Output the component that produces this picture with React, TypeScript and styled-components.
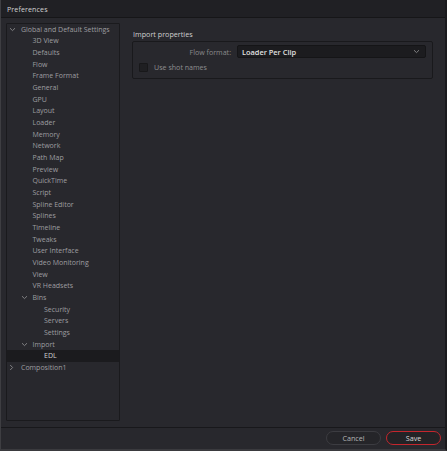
import React from "react";
import styled, { createGlobalStyle } from "styled-components";

const Global = createGlobalStyle`
  html, body { margin: 0; padding: 0; background: #28282e; }
  body { font-family: "Open Sans", "Noto Sans", sans-serif; }
  * { box-sizing: border-box; }
`;

const Window = styled.div`
  width: 447px;
  height: 451px;
  display: flex;
  flex-direction: column;
  background: #28282d;
  border-left: 1px solid #3e3e42;
  border-right: 2px solid #1a1a1d;
  border-bottom: 2px solid #3a3a3e;
  overflow: hidden;
`;

const TitleBar = styled.div`
  height: 18px;
  flex: none;
  display: flex;
  align-items: center;
  padding-left: 6px;
  background: #202024;
  border-bottom: 1px solid #161618;
  color: #d2d2d2;
  font-size: 7.1px;
  letter-spacing: 0.1px;
`;

const Main = styled.div`
  flex: 1;
  display: flex;
  gap: 12px;
  padding: 5px 12px 6px 5px;
  min-height: 0;
`;

const Tree = styled.div`
  width: 114px;
  flex: none;
  border: 1px solid #1a1a1d;
  border-radius: 1px;
  background: #28282d;
`;

const Row = styled.div<{ $indent: number; $selected?: boolean }>`
  height: 11.66px;
  display: flex;
  align-items: center;
  padding-left: ${(p) => p.$indent}px;
  padding-bottom: 1px;
  font-size: 7px;
  color: ${(p) => (p.$selected ? "#cfcfcf" : "#9e9ea0")};
  background: ${(p) => (p.$selected ? "#1b1b1e" : "transparent")};
  white-space: nowrap;
`;

const Chevron = styled.span`
  width: 8px;
  display: inline-flex;
  align-items: center;
  justify-content: flex-start;
  margin-right: 4px;
  margin-left: -12px;
  svg { display: block; }
`;

const Content = styled.div`
  flex: 1;
  display: flex;
  flex-direction: column;
  padding-top: 6px;
`;

const Heading = styled.div`
  font-size: 7.2px;
  color: #cfcfcf;
  height: 10px;
  line-height: 10px;
  padding-left: 1px;
  margin-bottom: 2px;
`;

const Group = styled.div`
  border: 1px solid #19191c;
  border-radius: 2px;
  height: 38px;
  padding: 3px 6px 0 5px;
  display: flex;
  flex-direction: column;
  gap: 4px;
`;

const FieldRow = styled.div`
  display: flex;
  align-items: center;
  gap: 6px;
`;

const Label = styled.div`
  width: 93px;
  text-align: right;
  font-size: 7.1px;
  color: #8a8a8c;
`;

const Select = styled.div`
  flex: 1;
  height: 13px;
  border-radius: 2px;
  background: #1c1c1f;
  border: 1px solid #151517;
  display: flex;
  align-items: center;
  justify-content: space-between;
  padding: 0 5px 0 4px;
  font-size: 7.4px;
  color: #e0e0e0;
  font-weight: 600;
`;

const CheckRow = styled.div`
  display: flex;
  align-items: center;
  gap: 6px;
  padding-left: 1px;
`;

const Box = styled.div`
  width: 9px;
  height: 9px;
  border-radius: 1px;
  background: #1f1f22;
  border: 1px solid #18181a;
`;

const CheckLabel = styled.div`
  font-size: 7.1px;
  color: #8e8e90;
`;

const Footer = styled.div`
  height: 22px;
  flex: none;
  border-top: 1px solid #18181b;
  display: flex;
  align-items: center;
  justify-content: flex-end;
  gap: 5px;
  padding-right: 4px;
  padding-bottom: 1px;
`;

const Button = styled.div<{ $primary?: boolean }>`
  width: 55px;
  height: 14px;
  border-radius: 7px;
  border: 1px solid ${(p) => (p.$primary ? "#c4262d" : "#3c3c41")};
  background: ${(p) => (p.$primary ? "#232326" : "#252529")};
  display: flex;
  align-items: center;
  justify-content: center;
  font-size: 7.2px;
  color: ${(p) => (p.$primary ? "#d8d8d8" : "#b4b4b4")};
`;

const Down = () => (
  <svg width="7" height="5" viewBox="0 0 7 5">
    <path d="M1 1.2 L3.5 3.6 L6 1.2" fill="none" stroke="#8a8a8c" strokeWidth="0.9" />
  </svg>
);
const Right = () => (
  <svg width="5" height="7" viewBox="0 0 5 7">
    <path d="M1.2 1 L3.6 3.5 L1.2 6" fill="none" stroke="#8a8a8c" strokeWidth="0.9" />
  </svg>
);

type Item = { label: string; level: number; open?: boolean; closed?: boolean; selected?: boolean };

const items: Item[] = [
  { label: "Global and Default Settings", level: 0, open: true },
  ...["3D View", "Defaults", "Flow", "Frame Format", "General", "GPU", "Layout", "Loader", "Memory", "Network", "Path Map", "Preview", "QuickTime", "Script", "Spline Editor", "Splines", "Timeline", "Tweaks", "User Interface", "Video Monitoring", "View", "VR Headsets"].map((l) => ({ label: l, level: 1 })),
  { label: "Bins", level: 1, open: true },
  { label: "Security", level: 2 },
  { label: "Servers", level: 2 },
  { label: "Settings", level: 2 },
  { label: "Import", level: 1, open: true },
  { label: "EDL", level: 2, selected: true },
  { label: "Composition1", level: 0, closed: true },
];

export default function App() {
  return (
    <>
      <Global />
      <Window>
        <TitleBar>Preferences</TitleBar>
        <Main>
          <Tree>
            {items.map((it, i) => (
              <Row key={i} $indent={14 + it.level * 11.5} $selected={it.selected}>
                {it.open || it.closed ? <Chevron>{it.open ? <Down /> : <Right />}</Chevron> : null}
                {it.label}
              </Row>
            ))}
          </Tree>
          <Content>
            <Heading>Import properties</Heading>
            <Group>
              <FieldRow>
                <Label>Flow format:</Label>
                <Select>
                  Loader Per Clip
                  <Down />
                </Select>
              </FieldRow>
              <CheckRow>
                <Box />
                <CheckLabel>Use shot names</CheckLabel>
              </CheckRow>
            </Group>
          </Content>
        </Main>
        <Footer>
          <Button>Cancel</Button>
          <Button $primary>Save</Button>
        </Footer>
      </Window>
    </>
  );
}
